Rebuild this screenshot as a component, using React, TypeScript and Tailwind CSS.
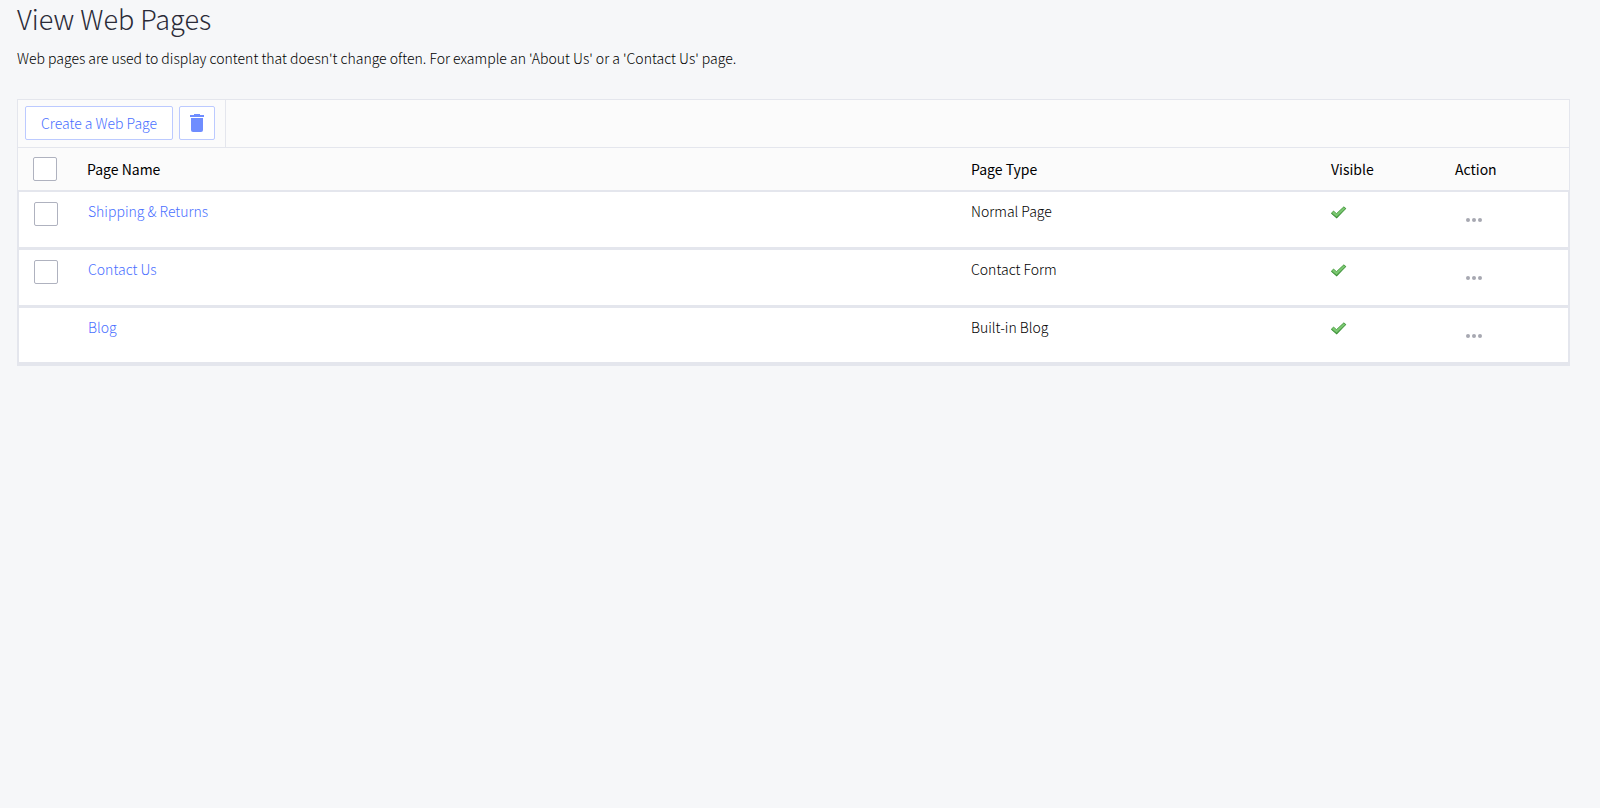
import React, { useState } from "react";
import clsx from "clsx";

type WebPage = {
  id: string;
  name: string;
  type: string;
  selectable: boolean;
};

const pages: WebPage[] = [
  { id: "shipping", name: "Shipping & Returns", type: "Normal Page", selectable: true },
  { id: "contact", name: "Contact Us", type: "Contact Form", selectable: true },
  { id: "blog", name: "Blog", type: "Built-in Blog", selectable: false },
];

const selectableIds = pages.filter((page) => page.selectable).map((page) => page.id);

function TrashIcon() {
  return (
    <svg width="14" height="18" viewBox="0 0 14 18" fill="#6f8dff" aria-hidden="true">
      <path d="M4 0h6v1h4v2H0V1h4z" />
      <path d="M1 4h12v12a2 2 0 0 1-2 2H3a2 2 0 0 1-2-2z" />
    </svg>
  );
}

function TickIcon() {
  return (
    <svg width="16" height="14" viewBox="0 0 16 14" role="img" aria-label="Visible">
      <path d="M0 7.6 2.4 5l3 2.4L12.9.6l2.4 2L5.7 12.4z" fill="#2f8a2b" />
      <path d="M.6 7 2.6 5.1l2.9 2.5L12.8 1l1.7 1.6L5.6 10.9z" fill="#7cc872" stroke="#5aa653" strokeWidth=".7" />
    </svg>
  );
}

function DotsIcon() {
  return (
    <svg width="18" height="4" viewBox="0 0 18 4" fill="#a7a8b1" aria-hidden="true">
      <circle cx="3" cy="2" r="2" />
      <circle cx="9" cy="2" r="2" />
      <circle cx="15" cy="2" r="2" />
    </svg>
  );
}

type CheckboxProps = {
  label: string;
  checked: boolean;
  onChange: () => void;
};

function Checkbox({ label, checked, onChange }: CheckboxProps) {
  return (
    <input
      type="checkbox"
      aria-label={label}
      checked={checked}
      onChange={onChange}
      className="block size-6 appearance-none rounded-xs border border-[#afb2bf] bg-white checked:bg-[#6f8dff]"
    />
  );
}

export default function App() {
  const [selected, setSelected] = useState<string[]>([]);
  const allSelected = selected.length === selectableIds.length;

  const toggle = (id: string) =>
    setSelected((current) =>
      current.includes(id) ? current.filter((item) => item !== id) : [...current, id],
    );

  return (
    <main className="min-h-screen bg-[#f6f7f9] pl-[17px] pr-[30px] font-['Noto_Sans_CJK_SC',sans-serif] text-sm font-light text-black">
      <h1 className="text-[27px] leading-[38px] font-extralight text-[#2b2b38]">View Web Pages</h1>
      <p className="mt-[10px] leading-5">
        Web pages are used to display content that doesn&apos;t change often. For example an
        &apos;About Us&apos; or a &apos;Contact Us&apos; page.
      </p>

      <section className="mt-[31px] border border-b-0 border-[#e4e6ed] bg-[#fbfbfb]">
        <div className="flex border-b border-[#e4e6ed]">
          <div className="flex gap-[6px] border-r border-[#e4e6ed] pt-[6px] pr-[10px] pb-[7px] pl-[7px]">
            <button
              type="button"
              className="h-[34px] rounded-xs border border-[#bccaff] bg-white px-[15px] text-[#4a6fff]"
            >
              Create a Web Page
            </button>
            <button
              type="button"
              aria-label="Delete selected pages"
              className="flex h-[34px] w-9 items-center justify-center rounded-xs border border-[#bccaff] bg-white"
            >
              <TrashIcon />
            </button>
          </div>
        </div>

        <table className="w-full table-fixed border-separate border-spacing-0 text-left">
          <thead>
            <tr className="h-11 *:border-b-2 *:border-[#e4e6ed] *:font-normal">
              <th className="w-[53px] pl-[15px]">
                <Checkbox
                  label="Select all pages"
                  checked={allSelected}
                  onChange={() => setSelected(allSelected ? [] : selectableIds)}
                />
              </th>
              <th className="px-4">Page Name</th>
              <th className="w-[360px] px-4">Page Type</th>
              <th className="w-[124px] px-4">Visible</th>
              <th className="w-[130px] px-4">Action</th>
            </tr>
          </thead>
          <tbody>
            {pages.map((page, index) => (
              <tr
                key={page.id}
                className={clsx(
                  "h-[58px] *:border-[#e4e6ed] *:bg-white *:align-top",
                  index === pages.length - 1 ? "*:border-b-4" : "*:border-b-3",
                )}
              >
                <td className="border-l pt-[10px] pl-[15px]">
                  {page.selectable && (
                    <Checkbox
                      label={`Select ${page.name}`}
                      checked={selected.includes(page.id)}
                      onChange={() => toggle(page.id)}
                    />
                  )}
                </td>
                <td className="px-[17px] pt-[9px]">
                  <a href="#" className="text-[#4a6fff]">
                    {page.name}
                  </a>
                </td>
                <td className="px-4 pt-[9px]">{page.type}</td>
                <td className="px-4 pt-[14px]">
                  <TickIcon />
                </td>
                <td className="border-r px-[26px] pt-[26px]">
                  <button type="button" aria-label={`Actions for ${page.name}`} className="block">
                    <DotsIcon />
                  </button>
                </td>
              </tr>
            ))}
          </tbody>
        </table>
      </section>
    </main>
  );
}
